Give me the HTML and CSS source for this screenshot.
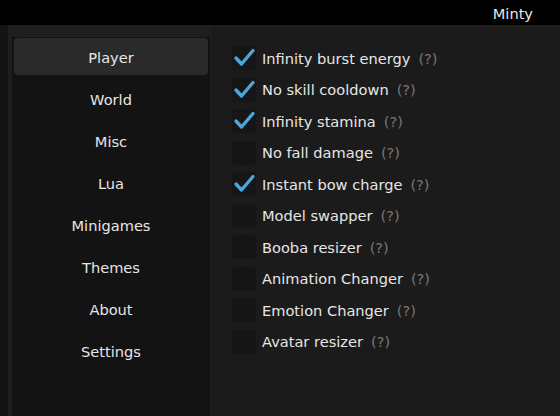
FILE: index.html
```html
<!DOCTYPE html>
<html lang="en">
<head>
  <meta charset="UTF-8" />
  <meta name="viewport" content="width=device-width, initial-scale=1.0"/>
  <title>Minty</title>
  <link rel="stylesheet" href="styles.css">
</head>
<body>

<div class="titlebar">Minty</div>

<div class="window">
  <div class="sidebar">
    <div class="tab active">Player</div>
    <div class="tab">World</div>
    <div class="tab">Misc</div>
    <div class="tab">Lua</div>
    <div class="tab">Minigames</div>
    <div class="tab">Themes</div>
    <div class="tab">About</div>
    <div class="tab">Settings</div>
  </div>

  <div class="content">
    <div class="option">
      <span class="box"><svg viewBox="0 0 24 24"><path d="M4 12l5.5 6L21 4.5"/></svg></span>
      <span class="label">Infinity burst energy</span><span class="help">(?)</span>
    </div>
    <div class="option">
      <span class="box"><svg viewBox="0 0 24 24"><path d="M4 12l5.5 6L21 4.5"/></svg></span>
      <span class="label">No skill cooldown</span><span class="help">(?)</span>
    </div>
    <div class="option">
      <span class="box"><svg viewBox="0 0 24 24"><path d="M4 12l5.5 6L21 4.5"/></svg></span>
      <span class="label">Infinity stamina</span><span class="help">(?)</span>
    </div>
    <div class="option">
      <span class="box"></span>
      <span class="label">No fall damage</span><span class="help">(?)</span>
    </div>
    <div class="option">
      <span class="box"><svg viewBox="0 0 24 24"><path d="M4 12l5.5 6L21 4.5"/></svg></span>
      <span class="label">Instant bow charge</span><span class="help">(?)</span>
    </div>
    <div class="option">
      <span class="box"></span>
      <span class="label">Model swapper</span><span class="help">(?)</span>
    </div>
    <div class="option">
      <span class="box"></span>
      <span class="label">Booba resizer</span><span class="help">(?)</span>
    </div>
    <div class="option">
      <span class="box"></span>
      <span class="label">Animation Changer</span><span class="help">(?)</span>
    </div>
    <div class="option">
      <span class="box"></span>
      <span class="label">Emotion Changer</span><span class="help">(?)</span>
    </div>
    <div class="option">
      <span class="box"></span>
      <span class="label">Avatar resizer</span><span class="help">(?)</span>
    </div>
  </div>
</div>

</body>
</html>
```

FILE: styles.css
```css
body {
  font-family: "DejaVu Sans", Verdana, sans-serif;
  font-size: 14.6px;
  background: #1e1e1e;
  color: #e6e6e6;
  margin: 0;
  padding: 0;
  height: 416px;
  overflow: hidden;
}
.titlebar {
  height: 25px;
  line-height: 27px;
  background: #000;
  text-align: right;
  padding-right: 27px;
  color: #e8e8e8;
}
.window {
  display: flex;
  height: 391px;
  border-left: 8px solid #151313;
}
.sidebar {
  width: 194px;
  margin: 12px 0 0 4px;
  padding: 1px 2px;
  background: #131313;
  display: flex;
  flex-direction: column;
  gap: 5px;
}
.tab {
  height: 37px;
  line-height: 39px;
  text-align: center;
  border-radius: 4px;
}
.tab.active {
  background: #2a2a2a;
}
.content {
  flex: 1;
  margin: 3px 0 0 2px;
  padding: 18px 0 0 20px;
  background: #1b1b1b;
  display: flex;
  flex-direction: column;
  gap: 7.55px;
}
.option {
  display: flex;
  align-items: center;
  height: 24px;
}
.box {
  width: 24px;
  height: 24px;
  background: #161616;
  border-radius: 2px;
  margin-right: 6px;
}
.box svg {
  width: 24px;
  height: 24px;
  display: block;
}
.box path {
  fill: none;
  stroke: #4aa6dc;
  stroke-width: 3.4;
  stroke-linecap: round;
  stroke-linejoin: round;
}
.help {
  color: #767676;
  margin-left: 8px;
}
```
